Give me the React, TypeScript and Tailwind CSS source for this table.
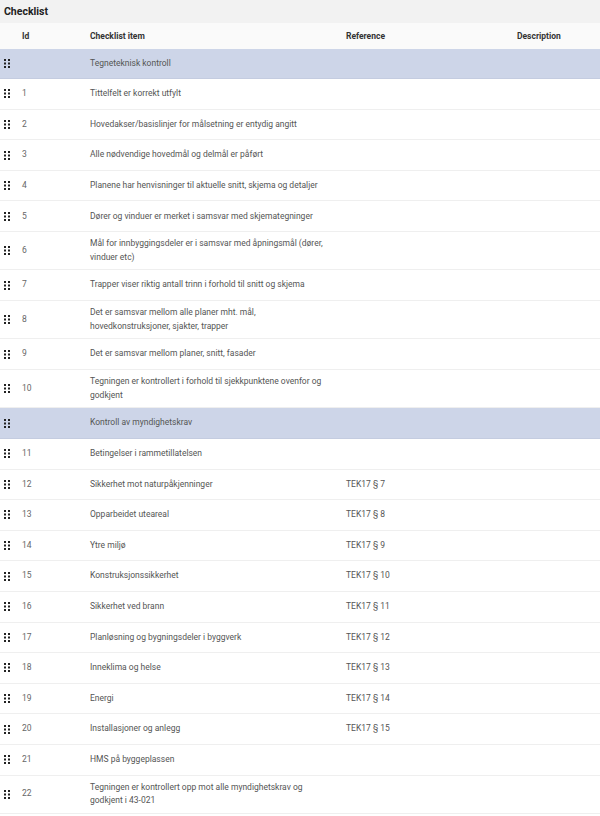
type Row = { id?: number; item: string; ref?: string; group?: boolean };

const rows: Row[] = [
  { item: "Tegneteknisk kontroll", group: true },
  { id: 1, item: "Tittelfelt er korrekt utfylt" },
  { id: 2, item: "Hovedakser/basislinjer for målsetning er entydig angitt" },
  { id: 3, item: "Alle nødvendige hovedmål og delmål er påført" },
  { id: 4, item: "Planene har henvisninger til aktuelle snitt, skjema og detaljer" },
  { id: 5, item: "Dører og vinduer er merket i samsvar med skjemategninger" },
  { id: 6, item: "Mål for innbyggingsdeler er i samsvar med åpningsmål (dører, vinduer etc)" },
  { id: 7, item: "Trapper viser riktig antall trinn i forhold til snitt og skjema" },
  { id: 8, item: "Det er samsvar mellom alle planer mht. mål, hovedkonstruksjoner, sjakter, trapper" },
  { id: 9, item: "Det er samsvar mellom planer, snitt, fasader" },
  { id: 10, item: "Tegningen er kontrollert i forhold til sjekkpunktene ovenfor og godkjent" },
  { item: "Kontroll av myndighetskrav", group: true },
  { id: 11, item: "Betingelser i rammetillatelsen" },
  { id: 12, item: "Sikkerhet mot naturpåkjenninger", ref: "TEK17 § 7" },
  { id: 13, item: "Opparbeidet uteareal", ref: "TEK17 § 8" },
  { id: 14, item: "Ytre miljø", ref: "TEK17 § 9" },
  { id: 15, item: "Konstruksjonssikkerhet", ref: "TEK17 § 10" },
  { id: 16, item: "Sikkerhet ved brann", ref: "TEK17 § 11" },
  { id: 17, item: "Planløsning og bygningsdeler i byggverk", ref: "TEK17 § 12" },
  { id: 18, item: "Inneklima og helse", ref: "TEK17 § 13" },
  { id: 19, item: "Energi", ref: "TEK17 § 14" },
  { id: 20, item: "Installasjoner og anlegg", ref: "TEK17 § 15" },
  { id: 21, item: "HMS på byggeplassen" },
  { id: 22, item: "Tegningen er kontrollert opp mot alle myndighetskrav og godkjent i 43-021" },
];

function DragHandle() {
  return (
    <svg width="7" height="9" viewBox="0 0 7 9" className="text-[#222]">
      {[0, 3.5, 7].map((y) =>
        [0, 4].map((x) => (
          <rect key={`${x}-${y}`} x={x} y={y} width="2" height="2" fill="currentColor" />
        ))
      )}
    </svg>
  );
}

const cols = "grid grid-cols-[22px_68px_256px_171px_1fr]";

export default function App() {
  return (
    <div className="w-[600px] h-[816px] bg-white text-[8.5px] leading-[13.5px] text-[#555] overflow-hidden" style={{ fontFamily: "Roboto, 'Noto Sans', sans-serif" }}>
      {/* Title */}
      <div className="h-[23px] bg-[#f2f2f2] flex items-center px-[4px] text-[10.5px] font-bold text-[#222]">Checklist</div>

      {/* Header */}
      <div className={`${cols} h-[25.5px] bg-[#fafafa] items-center font-bold text-[#333] pt-[2px]`}>
        <div />
        <div>Id</div>
        <div>Checklist item</div>
        <div>Reference</div>
        <div>Description</div>
      </div>

      {rows.map((r, i) => (
        <div
          key={i}
          className={`${cols} min-h-[30.6px] py-[5.2px] items-center border-b ${
            r.group ? "bg-[#cdd5e8] border-[#c4cce0]" : "border-[#efefef]"
          }`}
        >
          <div className="pl-[4px] flex items-center">
            <DragHandle />
          </div>
          <div className="text-[#666]">{r.id}</div>
          <div className="pr-[10px]">{r.item}</div>
          <div>{r.ref}</div>
          <div />
        </div>
      ))}
    </div>
  );
}
